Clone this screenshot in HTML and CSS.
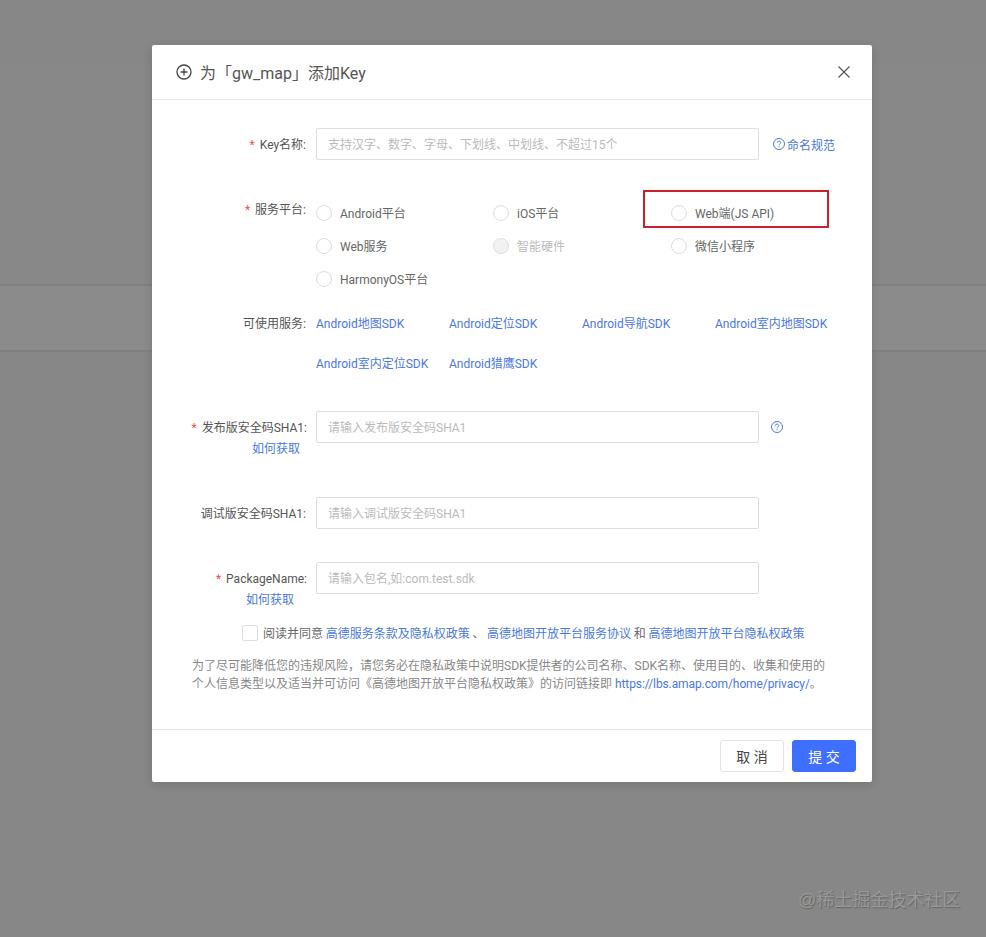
FILE: index.html
```html
<!DOCTYPE html>
<html lang="zh-CN">
  <head>
    <meta charset="UTF-8" />
    <title>添加Key</title>
    <link rel="stylesheet" href="styles.css">
  </head>
  <body>
    <div class="backdrop">
      <div class="band band-top"></div>
      <div class="band band-mid"></div>
      <div class="band band-low"></div>
    </div>

    <div class="dialog">
      <div class="dialog-head">
        <svg class="head-icon" viewBox="0 0 16 16" width="16" height="16">
          <circle cx="8" cy="8" r="7" />
          <path d="M8 4.6v6.8M4.6 8h6.8" />
        </svg>
        <span class="dialog-title">为「gw_map」添加Key</span>
        <svg class="close-icon" viewBox="0 0 12 12" width="12" height="12">
          <path d="M.5.5l11 11M11.5.5l-11 11" />
        </svg>
      </div>

      <div class="dialog-body">
        <div class="form-row row-name">
          <label class="form-label required">Key名称:</label>
          <input class="text-input" placeholder="支持汉字、数字、字母、下划线、中划线、不超过15个" />
          <a class="rule-link">
            <svg class="help-icon" viewBox="0 0 12 12" width="12" height="12">
              <circle cx="6" cy="6" r="5.5" />
              <path d="M4.3 4.7c0-1 .8-1.6 1.7-1.6s1.7.6 1.7 1.5c0 1.3-1.7 1.3-1.7 2.6" />
              <path d="M6 8.3v1" />
            </svg>命名规范
          </a>
        </div>

        <div class="form-row row-platform">
          <label class="form-label required label-platform">服务平台:</label>
          <div class="radio-grid">
            <div class="radio-item"><span class="radio"></span>Android平台</div>
            <div class="radio-item"><span class="radio"></span>iOS平台</div>
            <div class="radio-item"><span class="radio"></span>Web端(JS API)</div>
            <div class="radio-item"><span class="radio"></span>Web服务</div>
            <div class="radio-item disabled"><span class="radio"></span>智能硬件</div>
            <div class="radio-item"><span class="radio"></span>微信小程序</div>
            <div class="radio-item"><span class="radio"></span>HarmonyOS平台</div>
          </div>
        </div>

        <div class="form-row row-services">
          <label class="form-label label-services">可使用服务:</label>
          <div class="service-grid">
            <a>Android地图SDK</a>
            <a>Android定位SDK</a>
            <a>Android导航SDK</a>
            <a>Android室内地图SDK</a>
            <a>Android室内定位SDK</a>
            <a>Android猎鹰SDK</a>
          </div>
        </div>

        <div class="form-row row-release">
          <div class="label-stack">
            <label class="form-label required">发布版安全码SHA1:</label>
            <a class="how-link">如何获取</a>
          </div>
          <input class="text-input" placeholder="请输入发布版安全码SHA1" />
          <svg class="help-icon" viewBox="0 0 12 12" width="12" height="12">
            <circle cx="6" cy="6" r="5.5" />
            <path d="M4.3 4.7c0-1 .8-1.6 1.7-1.6s1.7.6 1.7 1.5c0 1.3-1.7 1.3-1.7 2.6" />
            <path d="M6 8.3v1" />
          </svg>
        </div>

        <div class="form-row row-debug">
          <label class="form-label">调试版安全码SHA1:</label>
          <input class="text-input" placeholder="请输入调试版安全码SHA1" />
        </div>

        <div class="form-row row-package">
          <div class="label-stack">
            <label class="form-label required">PackageName:</label>
            <a class="how-link how-link-wide">如何获取</a>
          </div>
          <input class="text-input" placeholder="请输入包名,如:com.test.sdk" />
        </div>

        <div class="agree-row">
          <span class="checkbox"></span>
          <span class="agree-text">阅读并同意 <a>高德服务条款及隐私权政策</a> 、 <a>高德地图开放平台服务协议</a> 和 <a>高德地图开放平台隐私权政策</a></span>
        </div>

        <div class="privacy-note">
          <p>为了尽可能降低您的违规风险，请您务必在隐私政策中说明SDK提供者的公司名称、SDK名称、使用目的、收集和使用的</p>
          <p>个人信息类型以及适当并可访问《高德地图开放平台隐私权政策》的访问链接即 <a class="privacy-link">https://lbs.amap.com/home/privacy/</a>。</p>
        </div>
      </div>

      <div class="dialog-foot">
        <button class="btn btn-cancel">取 消</button>
        <button class="btn btn-submit">提 交</button>
      </div>

      <div class="mark-box"></div>
    </div>

    <div class="watermark">@稀土掘金技术社区</div>
  </body>
</html>
```

FILE: styles.css
```css
* {
  margin: 0;
  padding: 0;
  box-sizing: border-box;
}

html,
body {
  height: 100%;
  overflow: hidden;
}

body {
  font-family: Roboto, "Noto Sans CJK SC", sans-serif;
  font-size: 12px;
  color: #666;
  background: #878787;
}

a {
  color: #4a78e0;
  text-decoration: none;
}

.backdrop {
  height: 100%;
}

.band {
  border-bottom: 2px solid #808080;
}

.band-top {
  height: 62px;
  border-bottom: none;
}

.band-mid {
  height: 224px;
  background: #888;
}

.band-low {
  height: 66px;
  background: #8b8b8b;
}

.dialog {
  position: absolute;
  top: 45px;
  left: 152px;
  width: 720px;
  background: #fff;
  border-radius: 2px;
  box-shadow: 0 2px 10px rgba(0, 0, 0, 0.15);
}

.dialog-head {
  height: 55px;
  display: flex;
  align-items: center;
  padding: 0 22px 0 24px;
  border-bottom: 1px solid #e8e8e8;
}

.head-icon {
  fill: none;
  stroke: #444;
  stroke-width: 1.3;
  margin-right: 8px;
}

.dialog-title {
  flex: 1;
  font-size: 16px;
  color: #555;
}

.close-icon {
  fill: none;
  stroke: #555;
  stroke-width: 1.2;
}

.dialog-body {
  padding-bottom: 36px;
}

.form-row {
  display: flex;
  align-items: flex-start;
}

.form-label {
  display: block;
  width: 154px;
  height: 32px;
  margin-right: 10px;
  flex-shrink: 0;
  text-align: right;
  line-height: 34px;
  color: #555;
}

.form-label.required::before {
  content: "*";
  margin-right: 5px;
  color: #e4574c;
}

.text-input {
  width: 443px;
  height: 32px;
  padding: 1px 11px 0;
  border: 1px solid #ddd;
  border-radius: 2px;
  font: inherit;
  outline: none;
}

.text-input::placeholder {
  color: #bbb;
}

.row-name {
  margin-top: 28px;
}

.rule-link {
  display: flex;
  align-items: center;
  height: 32px;
  margin-left: 14px;
}

.help-icon {
  flex-shrink: 0;
  fill: none;
  stroke: #4a78e0;
  stroke-width: 1;
  margin-right: 2px;
}

.row-release .help-icon {
  margin: 10px 0 0 12px;
}

.row-platform {
  margin-top: 36px;
}

.label-platform {
  height: 28px;
  line-height: 28px;
}

.radio-grid {
  display: grid;
  grid-template-columns: 177px 178px 160px;
  grid-auto-rows: 33px;
}

.radio-item {
  display: flex;
  align-items: center;
}

.radio {
  width: 16px;
  height: 16px;
  margin-right: 8px;
  border: 1px solid #ddd;
  border-radius: 50%;
  background: #fff;
}

.radio-item.disabled {
  color: #bbb;
}

.radio-item.disabled .radio {
  background: #f2f2f2;
}

.row-services {
  margin-top: 8px;
}

.label-services {
  height: 40px;
  line-height: 42px;
}

.service-grid {
  display: grid;
  grid-template-columns: repeat(4, 133px);
  grid-auto-rows: 40px;
  line-height: 42px;
  white-space: nowrap;
}

.row-release {
  margin-top: 28px;
}

.label-stack {
  width: 155px;
  margin-right: 9px;
  flex-shrink: 0;
  padding-top: 6px;
  text-align: right;
}

.label-stack .form-label {
  width: auto;
  height: auto;
  margin: 0;
  line-height: 22px;
}

.how-link {
  display: block;
  padding-right: 9px;
  margin-right: -2px;
  line-height: 20px;
}

.how-link-wide {
  padding-right: 15px;
}

.row-debug {
  margin-top: 38px;
}

.row-package {
  margin-top: 33px;
}

.agree-row {
  display: flex;
  align-items: center;
  height: 16px;
  margin: 15px 0 0 90px;
  white-space: nowrap;
}

.agree-text {
  padding-bottom: 2px;
  word-spacing: -0.3px;
}

.checkbox {
  width: 16px;
  height: 16px;
  margin-right: 5px;
  border: 1px solid #ddd;
  border-radius: 2px;
}

.privacy-note {
  margin: 16px 40px 0 40px;
  line-height: 18px;
  color: #888;
  white-space: nowrap;
}

.privacy-link {
  letter-spacing: -0.1px;
}

.dialog-foot {
  display: flex;
  justify-content: flex-end;
  gap: 8px;
  padding: 10px 16px;
  border-top: 1px solid #e8e8e8;
}

.btn {
  width: 64px;
  height: 32px;
  border-radius: 3px;
  border: 1px solid #e4e4e4;
  background: #fff;
  color: #444;
  font: inherit;
  font-size: 14px;
}

.btn-submit {
  border-color: #3f6fff;
  background: #3f6fff;
  color: #fff;
}

.mark-box {
  position: absolute;
  top: 145px;
  left: 491px;
  width: 186px;
  height: 38px;
  border: 2px solid #c9202c;
}

.watermark {
  position: absolute;
  top: 888px;
  left: 798px;
  font-family: "Liberation Sans", "Noto Sans CJK SC", sans-serif;
  font-size: 18px;
  line-height: 24px;
  color: #989898;
  text-shadow: 1px 1px 1px #666;
  white-space: nowrap;
}
```
